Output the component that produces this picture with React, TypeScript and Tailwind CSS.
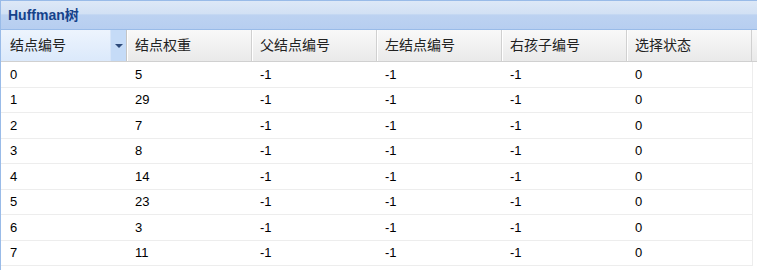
import React from "react";

const rows = [
  [0, 5],
  [1, 29],
  [2, 7],
  [3, 8],
  [4, 14],
  [5, 23],
  [6, 3],
  [7, 11],
];

const headers = ["结点编号", "结点权重", "父结点编号", "左结点编号", "右孩子编号", "选择状态"];
const font = { fontFamily: '"Liberation Sans", Arial, "Noto Sans CJK SC", sans-serif' };

export default function App() {
  return (
    <div className="w-[757px] h-[270px] bg-white overflow-hidden" style={font}>
      <div className="border-l border-[#99bbe8] h-full flex flex-col">
        {/* title */}
        <div className="h-[30px] border-t border-b border-[#99bbe8] bg-[linear-gradient(to_bottom,#dde8f7_0%,#d2e1f4_45%,#bcd2f1_50%,#b7cef0_100%)] flex items-center pl-[7px]">
          <span className="text-[14px] font-bold text-[#15428b]">Huffman树</span>
        </div>
        {/* header */}
        <div className="h-[32px] flex bg-[linear-gradient(to_bottom,#f9f9f9,#e9e9e9)] border-b border-[#d0d0d0] text-[14px] text-[#222]">
          {headers.map((h, i) => (
            <div
              key={h}
              className={
                i === 0
                  ? "w-[126px] relative flex items-center pl-[9px] border-r border-[#c5c5c5] bg-[linear-gradient(to_bottom,#edf4fd,#dbe9fb)]"
                  : "w-[125px] flex items-center pl-[8px] border-r border-[#d0d0d0] shadow-[inset_1px_0_0_#ffffff]"
              }
            >
              {h}
              {i === 0 && (
                <div className="absolute right-0 top-0 h-full w-[16px] bg-[#c5dbf7] border-l border-[#d6e5f9] flex items-center justify-center">
                  <div className="w-0 h-0 border-l-[4px] border-r-[4px] border-t-[4px] border-l-transparent border-r-transparent border-t-[#2d4a7a]" />
                </div>
              )}
            </div>
          ))}
          <div className="flex-1" />
        </div>
        {/* body */}
        <div className="flex flex-col text-[13px] text-black">
          {rows.map(([a, b], i) => (
            <div
              key={i}
              className={`w-[752px] flex border-b border-r border-[#ededed] ${i % 2 === 0 ? "h-[25.5px]" : "h-[25.6px]"}`}
            >
              <div className="w-[126px] flex items-center pl-[9px]">{a}</div>
              <div className="w-[125px] flex items-center pl-[8px]">{b}</div>
              <div className="w-[125px] flex items-center pl-[8px]">-1</div>
              <div className="w-[125px] flex items-center pl-[8px]">-1</div>
              <div className="w-[125px] flex items-center pl-[8px]">-1</div>
              <div className="w-[125px] flex items-center pl-[8px]">0</div>
            </div>
          ))}
        </div>
      </div>
    </div>
  );
}
